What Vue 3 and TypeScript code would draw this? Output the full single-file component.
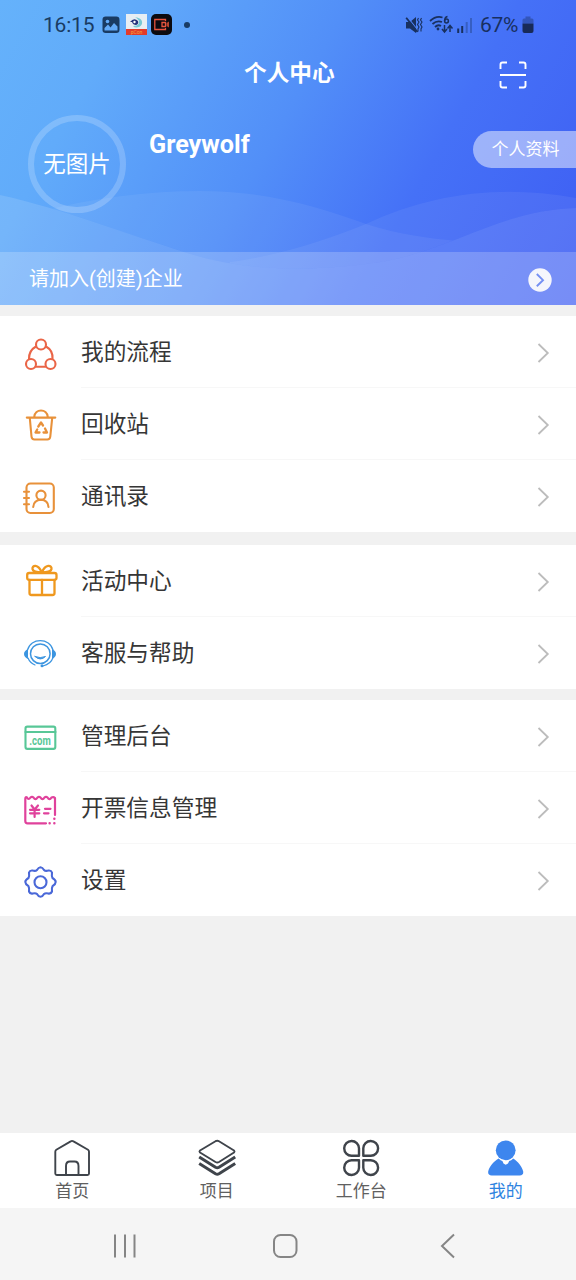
<script setup lang="ts">
interface Row { icon: string; label: string }
const groups: Row[][] = [
  [
    { icon: 'flow', label: '我的流程' },
    { icon: 'recycle', label: '回收站' },
    { icon: 'contacts', label: '通讯录' },
  ],
  [
    { icon: 'gift', label: '活动中心' },
    { icon: 'support', label: '客服与帮助' },
  ],
  [
    { icon: 'admin', label: '管理后台' },
    { icon: 'invoice', label: '开票信息管理' },
    { icon: 'settings', label: '设置' },
  ],
]
const tabs: Row[] = [
  { icon: 'home', label: '首页' },
  { icon: 'project', label: '项目' },
  { icon: 'work', label: '工作台' },
  { icon: 'mine', label: '我的' },
]
</script>

<template>
  <div class="screen">
    <header class="hero">
      <svg class="waves" viewBox="0 0 576 305" width="576" height="305">
        <clipPath id="above"><path d="M0 0V195C60 208 130 235 187 253C250 273 320 271 380 262C450 251 500 210 576 208V0Z" /></clipPath>
        <path d="M0 195C60 208 130 235 187 253C250 273 320 271 380 262C450 251 500 210 576 208V305H0Z" />
        <g clip-path="url(#above)">
          <path d="M40 212C90 198 150 191 200 191C270 191 320 208 366 224C400 235 430 238 456 241L470 305H40Z" class="soft" />
          <path d="M230 262C270 257 320 243 366 224C430 194 500 184 576 198V305H230Z" class="soft" />
        </g>
      </svg>
      <div class="status">
        <span class="time">16:15</span>
        <svg class="s-pic" width="18" height="18" viewBox="0 0 18 18"><rect x=".5" y=".5" width="17" height="16.5" rx="3.2" fill="#193b63" /><circle cx="5.5" cy="5.5" r="1.8" fill="#62aaf8" /><path d="M2.5 14.5V12L6 8.5L8.5 11.5L12 7L15.5 10.5V14.5Z" fill="#62aaf8" /></svg>
        <svg class="s-app" width="21" height="21" viewBox="0 0 21 21"><rect width="21" height="21" fill="#e8eef3" /><path d="M9 3.500C18 3 18.500 13 10.500 13.500Q8 13.500 7 12Q13 12 13 8Q13 5 9 3.500Z" fill="#77c9d5" /><path d="M4 8Q8 3 12 7Q13 10 10 11Q7 11 6 8Z" fill="#24337d" /><circle cx="8.500" cy="8" r="1.200" fill="#fff" /><rect y="15" width="21" height="6" fill="#e33b2b" /><text x="10.500" y="19.800" text-anchor="middle" font-size="5" font-family="Roboto, sans-serif" fill="#f7a33b">pCon</text></svg>
        <svg class="s-rec" width="21" height="21" viewBox="0 0 21 21"><rect width="21" height="21" rx="5" fill="#0c0b10" /><path d="M14.500 7V5.500H3.800V15.500H14.500V14M11 8.500H14.500V12.500H11Z" fill="none" stroke="#e8553e" stroke-width="1.300" /><path d="M15.500 9L18 7.500V13.500L15.500 12Z" fill="#b8452f" /></svg>
        <i class="s-dot"></i>
        <span class="spacer"></span>
        <svg width="18" height="18" viewBox="0 0 18 18"><path d="M1 6H5L11 1V17L5 12.500H1Z" fill="#18305f" /><path d="M2.500 1L13.500 15" stroke="#4e84f8" stroke-width="1.200" /><path d="M1.200 1.800L12.500 16" stroke="#18305f" stroke-width="1.800" /><path d="M13.500 2L12.500 4L14 6L12.500 8.500L14 11L13 13V15.500M16.500 2L15.500 4L17 6L15.500 8.500L17 11L16 13V15.500" fill="none" stroke="#18305f" stroke-width="1.100" /></svg>
        <svg class="s-wifi" width="25" height="20" viewBox="0 0 25 20"><g fill="none" stroke="#18305f" stroke-width="1.800"><path d="M1 6Q7 .5 13.500 2.500M3.500 9Q8 5 13 7M6 12Q9 9 12 11" /><circle cx="17.500" cy="6" r="1.900" stroke-width="1.500" /><path d="M18.500 1.500Q15.700 2 15.600 6M15.500 10V16.500M13 14L15.500 17L18 14M21 17V11M18.500 13.500L21 10.500L23.500 13.500" stroke-width="1.500" /></g><circle cx="9" cy="14" r="1.400" fill="#18305f" /></svg>
        <svg class="s-sig" width="16" height="18" viewBox="0 0 16 18"><path d="M1.200 12.500V17M5.200 10V17" stroke="#18305f" stroke-width="2" /><path d="M9.700 6V17M14 2V17" stroke="#18305f" stroke-opacity=".35" stroke-width="2" /></svg>
        <span class="pct">67%</span>
        <svg class="s-bat" width="12" height="18" viewBox="0 0 12 18"><path d="M3.500 .5H8.500V2.500H10Q11.500 2.500 11.500 4V7.500H.5V4Q.5 2.500 2 2.500H3.500Z" fill="#18305f" opacity=".4" /><path d="M.5 7.500H11.500V15Q11.500 17 9.500 17H2.500Q.5 17 .5 15Z" fill="#182a57" /></svg>
      </div>
      <div class="titlebar">
        <h1>个人中心</h1>
        <svg class="scan" width="28" height="28" viewBox="0 0 28 28" fill="none" stroke="#fff" stroke-width="1.900"><path d="M1.500 8V3.500Q1.500 1.500 3.500 1.500H8M20 1.500H24.500Q26.500 1.500 26.500 3.500V8M26.500 20V24.500Q26.500 26.500 24.500 26.500H20M8 26.500H3.500Q1.500 26.500 1.500 24.500V20M1 14H27" /></svg>
      </div>
      <div class="profile">
        <div class="avatar">无图片</div>
        <strong class="name">Greywolf</strong>
        <div class="pill">个人资料</div>
      </div>
      <div class="company">
        <span>请加入(创建)企业</span>
        <svg width="24" height="24" viewBox="0 0 24 24"><circle cx="12" cy="12" r="11.700" fill="#f5f6fc" /><path d="M8.800 6L15 12.200L8.800 18.300" fill="none" stroke="#7590f3" stroke-width="1.900" /></svg>
      </div>
    </header>

    <main>
      <section v-for="(g, gi) in groups" :key="gi" class="group" :class="'g' + gi">
        <div v-for="r in g" :key="r.label" class="row">
          <svg class="icon" width="40" height="40" viewBox="0 0 40 40" fill="none" stroke-width="2.100" stroke-linecap="round" stroke-linejoin="round">
            <g v-if="r.icon === 'flow'" stroke="#ea6547">
              <circle cx="21" cy="9.500" r="5" /><circle cx="11" cy="29" r="5" /><circle cx="30.500" cy="29" r="5" />
              <path d="M16 11.500Q8.800 15.500 9 24M26 11.500Q33.200 15.500 32.500 24M15.800 31.800H25.700" />
            </g>
            <g v-else-if="r.icon === 'recycle'" stroke="#e8913a">
              <path d="M6.800 10.600H35.300M14.200 10C15 1.300 27 1.300 27.800 10M9.800 11L11.500 29.500Q11.800 32.500 14.500 32.500H27.300Q30 32.500 30.300 29.500L32.200 11" />
              <path d="M18.300 19.500L21 15.500L23 18.500M25 21.500L27 25.500H23.500M19.500 25.500H15.500L17.200 22.500" stroke-width="2.300" />
            </g>
            <g v-else-if="r.icon === 'contacts'" stroke="#e8913a">
              <rect x="6.500" y="4.500" width="27.300" height="29.500" rx="4" />
              <path d="M4 12.800H9M4 19H9M4 25.300H9M13.200 28Q13.800 21 21 20.800Q28 21 28.500 28" />
              <circle cx="21" cy="16.200" r="4.600" />
            </g>
            <g v-else-if="r.icon === 'gift'" stroke="#ef981e" stroke-width="2.300">
              <rect x="7.200" y="9" width="29.300" height="6.800" rx="2" />
              <path d="M9.500 16V29Q9.500 31 11.500 31H32.500Q34.500 31 34.500 29V16M22 16V31M21.800 8.500C18 -.5 12 1 12.500 5Q13 8.500 21.800 8.500ZM21.800 8.500C25.500 -.5 32 1 31.500 5Q31 8.500 21.800 8.500Z" />
            </g>
            <g v-else-if="r.icon === 'support'" stroke="#3c95e0" stroke-width="1.500">
              <circle cx="20.300" cy="17.700" r="9.800" />
              <path d="M7.500 14.200C10.500 1.500 30 1.500 33 14.200M33 21.500Q31 28 23 30" stroke-width="1.200" />
              <path d="M8 13V23Q4 21 4 18Q4 15 8 13ZM32 13V23Q36 21 36 18Q36 15 32 13Z" fill="#3c95e0" stroke="none" />
              <path d="M15 20.500Q20.300 25.500 25.500 20.500Q20.300 22.800 15 20.500Z" fill="#3c95e0" stroke-width="1" /><path d="M8 22Q10 27 15 29" stroke-width="1.200" /><circle cx="22" cy="29.800" r="1.500" fill="#3c95e0" stroke="none" />
            </g>
            <g v-else-if="r.icon === 'admin'" stroke="#58c797">
              <rect x="5.500" y="7.600" width="29.800" height="22.300" rx="1.800" /><path d="M5.500 13H35.500" />
              <text x="9.300" y="26.300" font-family="Roboto, sans-serif" font-weight="700" font-size="12" textLength="21.500" lengthAdjust="spacingAndGlyphs" fill="#58c797" stroke="none">.com</text>
            </g>
            <g v-else-if="r.icon === 'invoice'" stroke="#e0429c" stroke-width="2.200">
              <path d="M35 24V7Q33.500 5.500 31.500 6.500Q29.500 9.800 27.500 6.500Q26 5 24.500 6.500Q22.500 9.800 20.500 6.500Q19 5 17.500 6.500Q15.500 9.800 13.500 6.500Q12 5 10.500 6.500Q8.500 9.500 7 6.500Q5.300 5.500 5.300 8V30Q5.300 32.300 7.500 32.300H26" />
              <path d="M11.500 14.500L14.600 18.500L18 14.500M10 18.800H19.300M10 22.300H19.300M14.600 18.500V26M25 17.800H30.500M24 22.300H28.500" />
              <path d="M29.600 32.300H29.700M34.300 32.300H34.400M34.300 27.800H34.400" stroke-width="2.400" />
            </g>
            <g v-else stroke="#4a68d8">
              <path d="M20.500 4.300Q22.500 4.500 24 7Q25.500 8.500 28.500 7.500Q31.200 7.200 32 9.500Q31.500 13 32.500 15Q35.700 17 35.700 19Q35.700 21 32.500 23.200Q31.500 25 32 28.500Q31 31 28.500 30.600Q25.500 29.600 24 31Q22.500 33.700 20.500 33.800Q18.500 33.700 17 31Q15.500 29.600 12.500 30.600Q10 31 9 28.500Q9.500 25 8.500 23.200Q5.300 21 5.300 19Q5.300 17 8.500 15Q9.500 13 9 9.500Q9.800 7.200 12.500 7.500Q15.500 8.500 17 7Q18.500 4.500 20.500 4.300Z" />
              <circle cx="20.500" cy="19.200" r="6" />
            </g>
          </svg>
          <div class="cell">
            <span>{{ r.label }}</span>
            <svg width="13" height="20" viewBox="0 0 13 20" fill="none" stroke="#bcbcbc" stroke-width="1.800"><path d="M1.500 1L10.800 10L1.500 19" /></svg>
          </div>
        </div>
      </section>
    </main>

    <nav class="tabs">
      <div v-for="t in tabs" :key="t.label" class="tab" :class="{ active: t.icon === 'mine' }">
        <svg width="40" height="40" viewBox="0 0 40 40" fill="none" stroke="#3f444b" stroke-width="1.900" stroke-linejoin="round">
          <path v-if="t.icon === 'home'" d="M20 2.900Q20.700 2.900 21.500 3.400L36 11.800Q37 12.500 37 13.700V35.500Q37 37 35.500 37H4.800Q3.300 37 3.300 35.500V13.700Q3.300 12.500 4.300 11.800L18.700 3.400Q19.500 2.900 20 2.900ZM14 37V28Q14 23.500 18 23.500H22.500Q26.500 23.500 26.500 28V37" />
          <g v-else-if="t.icon === 'project'">
            <path d="M22 3.200L37 12.500Q38 13.500 37 14.500L22 24Q20.300 25 18.500 24L3 14.500Q2 13.500 3 12.500L18.500 3.200Q20.300 2.200 22 3.200Z" />
            <path d="M2.200 19L18.500 29.300Q20.300 30.300 22 29.300L38.200 19M2.200 25.500L18.500 35.700Q20.300 36.700 22 35.700L38.200 25.500" stroke-width="3" />
          </g>
          <g v-else-if="t.icon === 'work'" stroke-width="2.400">
            <path d="M18 17.800H10.500A7.400 7.400 0 1 1 18 10.300ZM22.300 17.800V10.300A7.400 7.400 0 1 1 29.800 17.800ZM18 22.200V29.700A7.400 7.400 0 1 1 10.500 22.200ZM22.300 22.200H29.800A7.400 7.400 0 1 1 22.300 29.700Z" />
          </g>
          <g v-else fill="#3d86ee" stroke="none"><circle cx="19.700" cy="12.300" r="9.900" /><path d="M12.700 20.500Q14.700 22.500 16.400 23L17.500 25.500L19.700 26.800L22 25.500L23.200 23Q25.200 22.500 27.200 20.500C32.200 23.500 36.200 29 37.200 33.500Q37.700 37.500 33.700 37.500H5.700Q1.700 37.500 2.200 33.500C3.200 29 7.200 23.500 12.700 20.500Z" /></g>
        </svg>
        <span>{{ t.label }}</span>
      </div>
    </nav>

    <footer class="sysnav">
      <svg width="24" height="26" viewBox="0 0 24 26" stroke="#858585" stroke-width="2"><path d="M2 1.500V24.500M12 1.500V24.500M21.500 1.500V24.500" /></svg>
      <svg class="homekey" width="26" height="26" viewBox="0 0 26 26" fill="none" stroke="#858585" stroke-width="2"><rect x="2" y="2" width="22.500" height="22" rx="6.500" /></svg>
      <svg width="16" height="26" viewBox="0 0 16 26" fill="none" stroke="#858585" stroke-width="2"><path d="M14 1.500L2 13L14 24.500" /></svg>
    </footer>
  </div>
</template>

<style>
body { margin: 0; background: #f1f1f1; }
</style>

<style scoped>
.screen { width: 576px; height: 1280px; display: flex; flex-direction: column; background: #f1f1f1; font-family: Roboto, "Noto Sans CJK SC", sans-serif; overflow: hidden; box-sizing: border-box; }
svg { display: block; flex: none; }
.hero { position: relative; height: 305px; display: flex; flex-direction: column; color: #fff; background: linear-gradient(119deg, #65b2fb 0%, #61abfa 18%, #528ff8 47%, #4571f7 70%, #3e5df3 100%); }
.waves { position: absolute; left: 0; top: 0; }
.waves path { fill: #fff; fill-opacity: .12; }
.waves .soft { fill-opacity: .06; }
.hero > div { position: relative; }
.status { height: 48px; display: flex; align-items: center; box-sizing: border-box; padding: 1px 42px 0 43px; font-size: 21px; color: #193b63; }
.time { width: 59px; letter-spacing: -.2px; }
.s-app { margin-left: 6px; }
.s-rec { margin-left: 4px; }
.s-dot { width: 6px; height: 6px; border-radius: 50%; background: #193b63; margin-left: 12px; }
.spacer { flex: 1; }
.s-wifi { margin-left: 6px; }
.s-sig { margin: 0 7px 0 3px; }
.pct { color: #182f60; letter-spacing: -.3px; }
.s-bat { margin-left: 4px; }
.titlebar { height: 48px; display: flex; justify-content: center; padding: 0 49px 0 101px; }
h1 { margin: 0; font-size: 22.700px; line-height: 51px; font-weight: 700; width: 92px; margin-left: 143px; white-space: nowrap; }
.scan { margin: 13px 0 0 auto; }
.profile { height: 156px; display: flex; align-items: flex-start; }
.avatar { width: 98px; height: 98px; box-sizing: border-box; border: 6px solid rgba(255,255,255,.2); border-radius: 50%; margin: 19px 0 0 28px; font-size: 22.500px; line-height: 87px; text-align: center; white-space: nowrap; }
.name { margin: 34px 0 0 23px; font-size: 25.200px; line-height: 30px; font-weight: 700; }
.pill { margin: 35px 0 0 auto; width: 103px; height: 37px; box-sizing: border-box; padding-left: 18.500px; border-radius: 19px 0 0 19px; background: rgba(255,255,255,.48); font-size: 17px; line-height: 36.500px; }
.company { height: 53px; display: flex; align-items: center; justify-content: space-between; box-sizing: border-box; padding: 0 24px 0 29px; background: rgba(255,255,255,.2); font-size: 20px; }
.company span { line-height: 52px; }
.company svg { margin-top: 2px; }
.group { background: #fff; }
.g0 { margin-top: 11px; }
.g1 { margin-top: 13px; }
.g2 { margin-top: 11px; }
.row { height: 72px; display: flex; padding-left: 20px; }
.icon { margin-top: 19px; }
.cell { flex: 1; margin-left: 21px; display: flex; justify-content: space-between; align-items: center; padding-right: 26px; border-bottom: 1px solid #f7f7f7; font-size: 22.700px; color: #363636; }
.cell span { line-height: 30px; margin-top: 3px; }
.cell svg { margin-top: 3px; }
.row:last-child .cell { border-bottom-color: transparent; }
.tabs { margin-top: auto; height: 75px; background: #fff; display: flex; }
.tab { width: 144.500px; display: flex; flex-direction: column; align-items: center; font-size: 17px; color: #606060; flex: none; }
.tab svg { margin-top: 5px; }
.tab span { line-height: 24px; margin-top: 1px; }
.tab.active { color: #2d83df; }
.sysnav { height: 72px; background: #f5f5f5; display: flex; align-items: center; box-sizing: border-box; padding: 3px 120px 0 113px; justify-content: space-between; }
.homekey { margin-right: 7px; }
</style>
